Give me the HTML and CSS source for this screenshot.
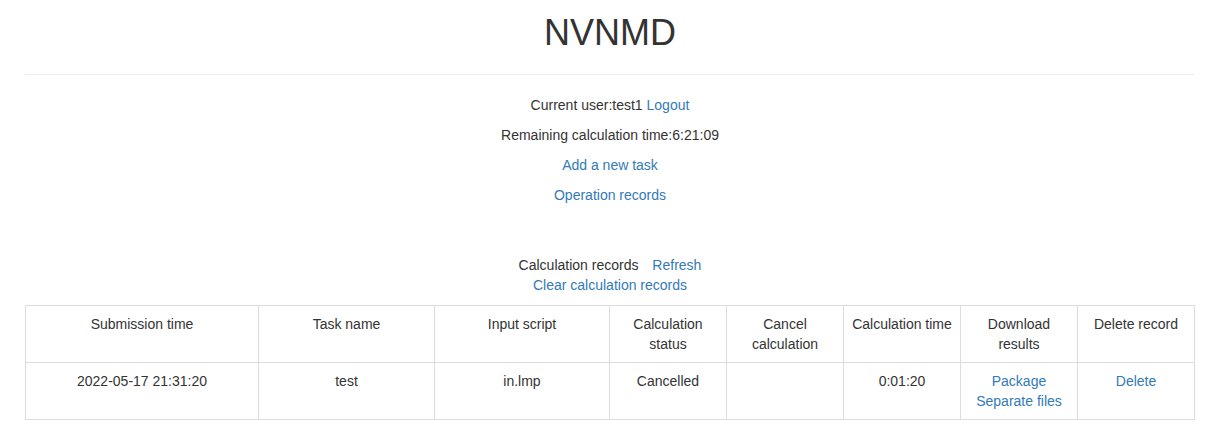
FILE: index.html
```html
<!DOCTYPE html>
<html lang="en">
<head>
<meta charset="utf-8">
<title>NVNMD</title>
<link rel="stylesheet" href="styles.css">
</head>
<body>
<div class="container">
  <h1 class="title">NVNMD</h1>
  <hr class="divider">
  <div class="info">
    <p>Current user:test1 <a href="#">Logout</a></p>
    <p>Remaining calculation time:6:21:09</p>
    <p><a href="#">Add a new task</a></p>
    <p><a href="#">Operation records</a></p>
  </div>
  <div class="records-head">
    <div>Calculation records <a href="#" class="refresh">Refresh</a></div>
    <div><a href="#">Clear calculation records</a></div>
  </div>
  <table class="records">
    <colgroup>
      <col class="c-sub">
      <col class="c-name">
      <col class="c-script">
      <col class="c-small">
      <col class="c-small">
      <col class="c-small">
      <col class="c-small">
      <col class="c-small">
    </colgroup>
    <tr>
      <td>Submission time</td>
      <td>Task name</td>
      <td>Input script</td>
      <td>Calculation status</td>
      <td>Cancel calculation</td>
      <td>Calculation time</td>
      <td>Download results</td>
      <td>Delete record</td>
    </tr>
    <tr>
      <td>2022-05-17 21:31:20</td>
      <td>test</td>
      <td>in.lmp</td>
      <td>Cancelled</td>
      <td></td>
      <td>0:01:20</td>
      <td><a href="#">Package</a><br><a href="#">Separate files</a></td>
      <td><a href="#">Delete</a></td>
    </tr>
  </table>
</div>
</body>
</html>
```

FILE: styles.css
```css
html, body {
  margin: 0;
  padding: 0;
  background: #fff;
}
body {
  font-family: "Liberation Sans", Arial, Helvetica, sans-serif;
  font-size: 14px;
  line-height: 20px;
  color: #333;
}
a {
  color: #337ab7;
  text-decoration: none;
}
.container {
  width: 1170px;
  margin-left: 25px;
}
.title {
  margin: 13px 0 0;
  font-size: 36px;
  line-height: 39.6px;
  font-weight: 500;
  text-align: center;
}
.divider {
  margin: 21px 0 20px;
  border: 0;
  border-top: 1px solid #eee;
  height: 0;
}
.info {
  text-align: center;
}
.info p {
  margin: 0 0 10px;
}
.records-head {
  margin-top: 50px;
  margin-bottom: 10px;
  text-align: center;
}
.refresh {
  margin-left: 10px;
}
.records {
  width: 1169px;
  table-layout: fixed;
  border-collapse: collapse;
  text-align: center;
}
.records td {
  border: 1px solid #ddd;
  padding: 8px;
  vertical-align: top;
  line-height: 20px;
}
.c-sub { width: 233px; }
.c-name { width: 176px; }
.c-script { width: 175px; }
.c-small { width: 117px; }
```
